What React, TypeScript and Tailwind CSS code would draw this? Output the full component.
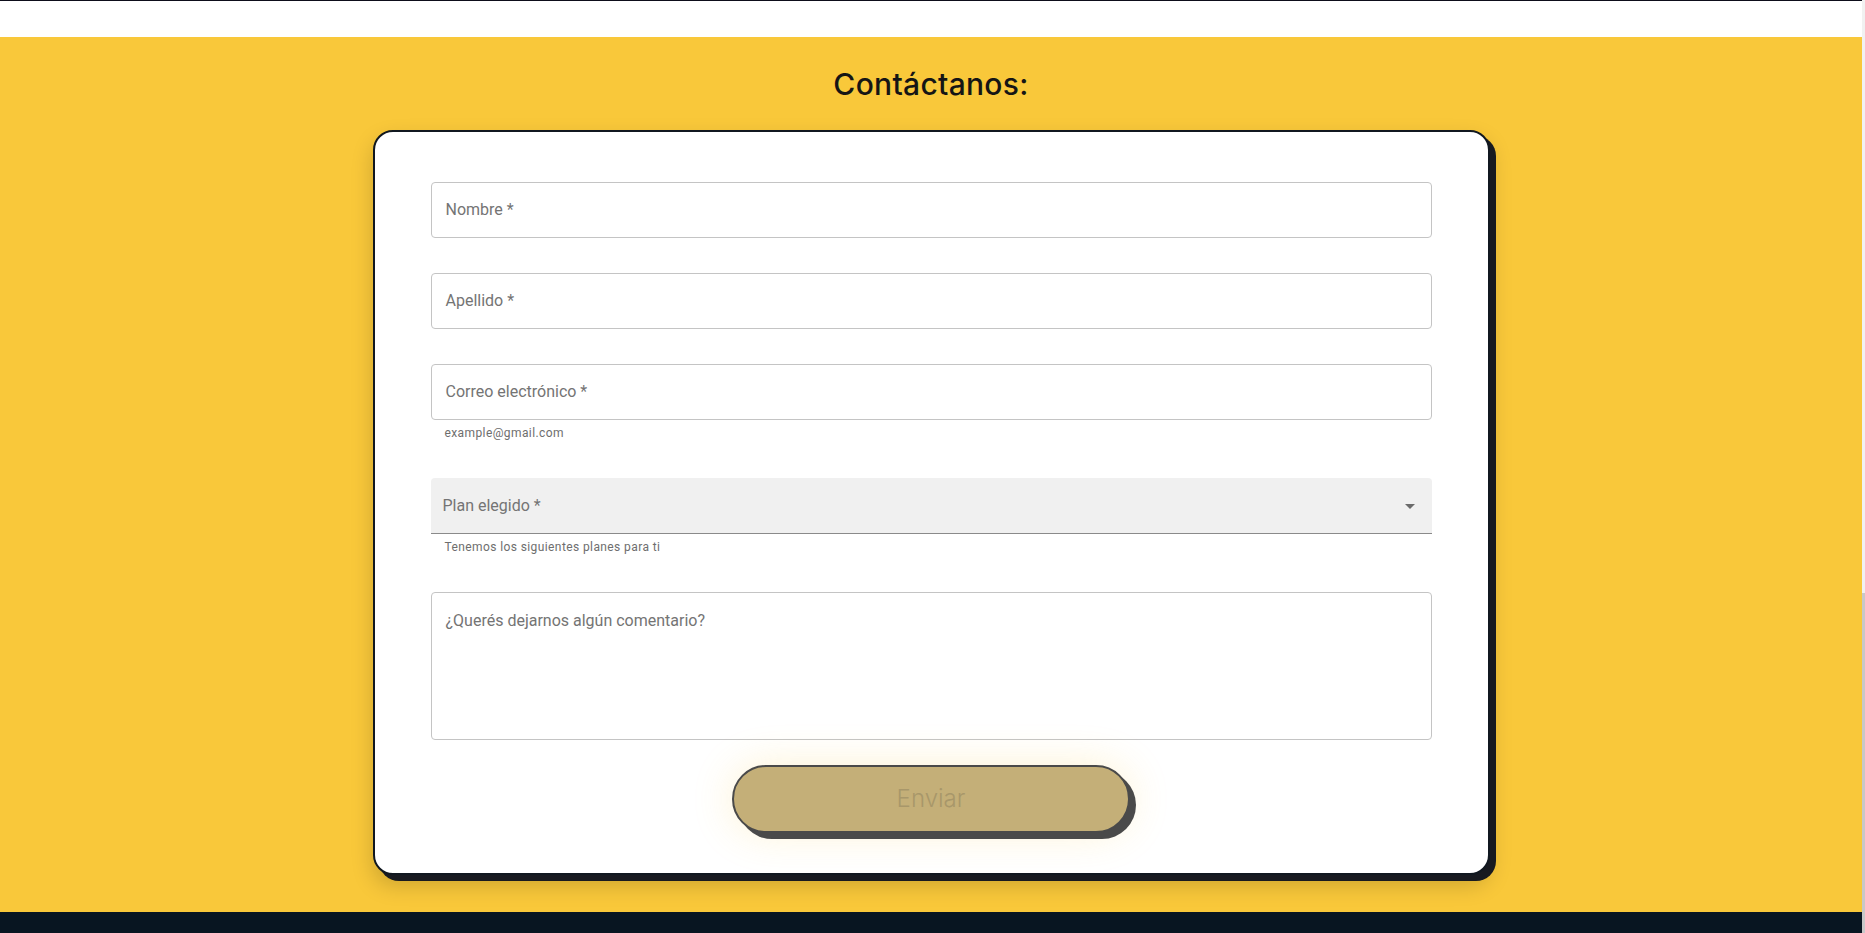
import React from "react";

const outlined = [
  { label: "Nombre *", helper: "" },
  { label: "Apellido *", helper: "" },
  { label: "Correo electrónico *", helper: "example@gmail.com" },
];

function Helper({ text }: { text: string }) {
  return (
    <p className="mt-[3px] px-[14px] text-[12px] leading-[20px] tracking-[0.4px] text-[#6e6e6e]">
      {text}
    </p>
  );
}

export default function App() {
  return (
    <div className="flex min-h-screen bg-white font-['Roboto',sans-serif]">
      <div className="flex-1">
        {/* ── Top bar ── */}
        <div className="h-[37px] border-t border-[#0d0d1a] bg-white" />

        {/* ── Contact section ── */}
        <section className="flex flex-col items-center bg-[#f9c83a] pt-[29px] pb-[37px]">
          <h2 className="font-['Inter',sans-serif] text-[30px] font-medium leading-[36px] tracking-[0.01em] text-[#151515]">
            Contáctanos:
          </h2>

          <div className="mt-[28px] w-[1117px] rounded-[20px] border-2 border-[#111820] bg-white px-[56px] pt-[50px] pb-[40px] shadow-[6px_6px_0_#181a20,0_10px_22px_rgba(0,0,0,0.18)]">
            {/* Outlined text fields */}
            {outlined.map(({ label, helper }) => (
              <div key={label} className="mb-[35px]">
                <div className="flex h-[56px] items-center rounded-[4px] border border-[#c4c4c4] px-[14px]">
                  <span className="text-[16px] text-[#747474]">{label}</span>
                </div>
                {helper && <Helper text={helper} />}
              </div>
            ))}

            {/* Filled select */}
            <div className="mb-[35px]">
              <div className="flex h-[56px] items-center justify-between rounded-t-[4px] border-b border-[#8a8a8a] bg-[#f0f0f0] pr-[10px] pl-[12px]">
                <span className="text-[16px] text-[#747474]">Plan elegido *</span>
                <svg width="24" height="24" viewBox="0 0 24 24" className="fill-[#6b6b6b]">
                  <path d="M7 10l5 5 5-5z" />
                </svg>
              </div>
              <Helper text="Tenemos los siguientes planes para ti" />
            </div>

            {/* Multiline comment */}
            <div className="h-[148px] rounded-[4px] border border-[#c4c4c4] px-[14px] py-[16px]">
              <span className="text-[16px] leading-[23px] text-[#747474]">
                ¿Querés dejarnos algún comentario?
              </span>
            </div>

            {/* Submit */}
            <div className="mt-[25px] flex justify-center">
              <button
                disabled
                className="h-[68px] w-[398px] rounded-full border-2 border-[#4a4a4a] bg-[#c4af78] font-['Inter',sans-serif] text-[24px] font-light text-[#a8976a] shadow-[6px_6px_0_#4a4a4a,0_0_40px_rgba(250,200,60,0.22)]"
              >
                Enviar
              </button>
            </div>
          </div>
        </section>

        {/* ── Footer ── */}
        <footer className="h-[21px] bg-[#081521]" />
      </div>

      {/* ── Thin scrollbar ── */}
      <div className="flex w-[3px] flex-col bg-[#f1f1f1]">
        <div className="flex-1" />
        <div className="h-[340px] bg-[#c8c8c8]" />
      </div>
    </div>
  );
}
